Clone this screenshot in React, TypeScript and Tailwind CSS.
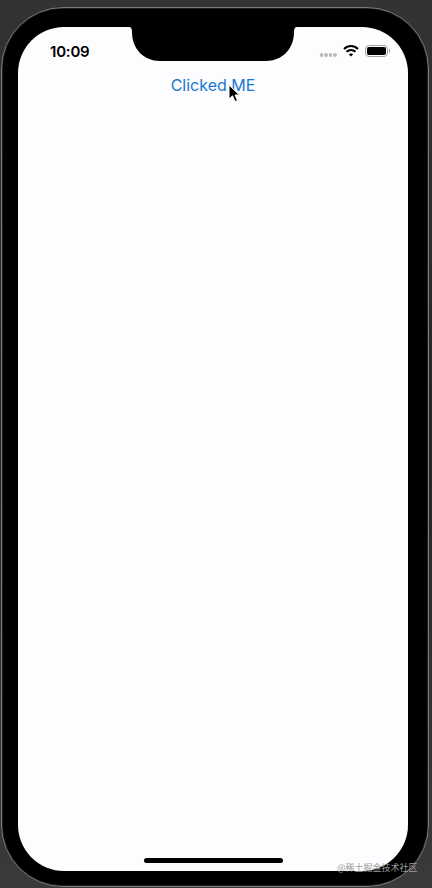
function Notch() {
  return (
    <svg className="absolute left-[111px] top-0" width="168" height="35" viewBox="0 0 168 35" fill="#000">
      <path d="M0 0 H168 C 166 0 165 1.500 165 5 C165 22 153 34 137 34 H31 C15 34 3 22 3 5 C3 1.500 2 0 0 0 Z" />
    </svg>
  );
}

function WifiGlyph() {
  return (
    <svg width="16" height="12" viewBox="0 0 16 12" fill="none" stroke="#000" strokeWidth="2">
      <path d="M1 4 C5 0 11 0 15 4" />
      <path d="M3.500 6.800 C6 4.400 10 4.400 12.500 6.800" />
      <path d="M8 11.500 L5.800 9.300 C7 8.200 9 8.200 10.200 9.300 Z" fill="#000" stroke="none" />
    </svg>
  );
}

function Cursor() {
  return (
    <svg className="absolute left-[210px] top-[57px]" width="14" height="19" viewBox="0 0 14 19">
      <path d="M1 1 V15 L4.500 11.800 L7 17.500 L9.500 16.500 L7 11 H11.500 Z" fill="#000" stroke="#fff" strokeWidth="1" />
    </svg>
  );
}

export default function App() {
  return (
    <div className="relative h-[888px] w-[432px] overflow-hidden bg-gradient-to-b from-[#333333] via-[#262626] to-[#3a3a3a] pt-[7px] pl-[1px] font-['Inter',sans-serif]">
      <div className="h-[880px] w-[428px] rounded-[62px] border border-[#7c7c7e] bg-black pt-[19px] pl-[16px] shadow-[inset_0_0_0_1px_#1e1e1e]">
        <div className="relative h-[844px] w-[390px] overflow-hidden rounded-[46px] bg-[#fdfcfe]">
          <Notch />
          <div className="flex h-[47px] items-start justify-between pt-[15px] pl-[32px] pr-[18px]">
            <span className="text-[15px] leading-[20px] font-semibold tracking-[-0.2px] text-black">10:09</span>
            <div className="flex items-start gap-[6px] pt-[3px]">
              <div className="mt-[8px] flex gap-[1px]">
                <span className="size-[3.500px] rounded-full bg-[#b8b8ba]" />
                <span className="size-[3.500px] rounded-full bg-[#b8b8ba]" />
                <span className="size-[3.500px] rounded-full bg-[#b8b8ba]" />
                <span className="size-[3.500px] rounded-full bg-[#b8b8ba]" />
              </div>
              <WifiGlyph />
              <div className="flex items-center">
                <div className="h-[12px] w-[23px] rounded-[4px] border-[1.500px] border-[#a0a0a2] bg-black bg-clip-content p-[1px]" />
                <div className="ml-[1px] h-[4px] w-[1.500px] rounded-r bg-[#a0a0a2]" />
              </div>
            </div>
          </div>
          <button className="block w-full text-center text-[16px] leading-[22px] text-[#1878d0]">Clicked ME</button>
          <Cursor />
          <div className="absolute bottom-[8px] left-[126px] h-[5px] w-[139px] rounded-full bg-black" />
        </div>
      </div>
      <span className="absolute left-[337px] top-[862px] text-[9px] leading-[12px] text-[#9b9b9b] font-['Noto_Sans_CJK_SC',sans-serif]">@稀土掘金技术社区</span>
    </div>
  );
}
